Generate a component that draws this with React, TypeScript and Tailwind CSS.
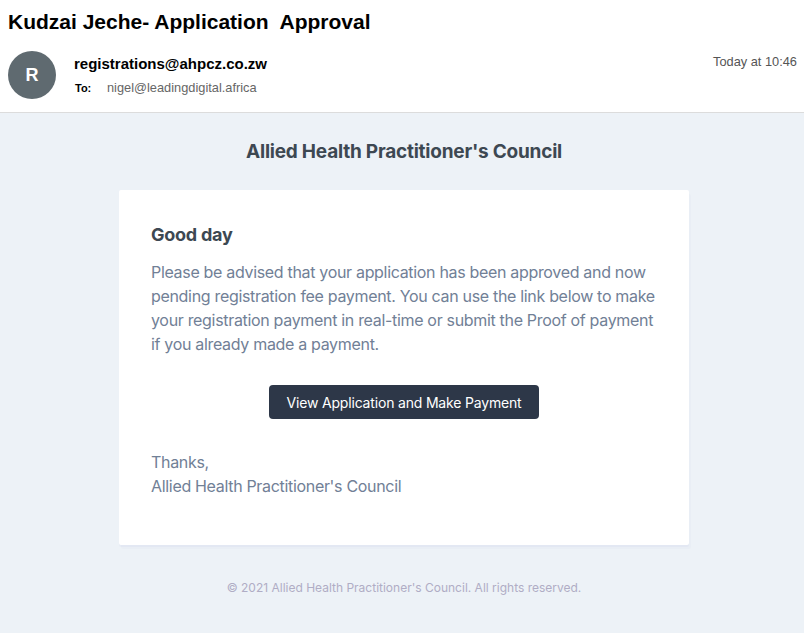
export default function App() {
  return (
    <div className="w-[804px] h-[633px] overflow-hidden bg-[#edf2f7] flex flex-col" style={{ fontFamily: '"Liberation Sans", Arial, sans-serif' }}>
      <div className="bg-white h-[113px] border-b border-[#dcdcdc] shrink-0 relative">
        <h1 className="absolute left-[8px] top-[8px] text-[21px] font-bold text-black whitespace-pre leading-[28px]">Kudzai Jeche- Application  Approval</h1>
        <div className="absolute left-[8px] top-[51px] w-[48px] h-[48px] rounded-full bg-[#5f6a70] flex items-center justify-center text-white text-[18px] font-bold">R</div>
        <div className="absolute left-[74px] top-[55px] text-[15px] font-bold text-black leading-[18px]">registrations@ahpcz.co.zw</div>
        <div className="absolute left-[75px] top-[81px] flex items-center text-[11px] leading-[14px]">
          <span className="font-bold text-black w-[32px]">To:</span>
          <span className="text-[12.8px] text-[#666]">nigel@leadingdigital.africa</span>
        </div>
        <div className="absolute right-[7px] top-[54px] text-[12.8px] text-[#555] leading-[16px]">Today at 10:46</div>
      </div>
      <div className="flex flex-col items-center pl-[4px]" style={{ fontFamily: 'Inter, "Liberation Sans", sans-serif' }}>
        <div className="h-[77px] pt-[2px] flex items-center justify-center text-[19px] font-bold tracking-[-0.22px] text-[#3d4852]">Allied Health Practitioner's Council</div>
        <div className="w-[570px] bg-white rounded-[2px] shadow-[0_2px_0_rgba(0,0,150,0.025),2px_4px_0_rgba(0,0,150,0.015)] px-[32px] pt-[32px] pb-[47px]">
          <div className="text-[18px] font-bold tracking-[-0.25px] text-[#3d4852] leading-[26px]">Good day</div>
          <p className="mt-[12px] text-[16px] leading-[24px] tracking-[-0.32px] text-[#718096]">Please be advised that your application has been approved and now pending registration fee payment. You can use the link below to make your registration payment in real-time or submit the Proof of payment if you already made a payment.</p>
          <div className="flex justify-center mt-[29px]">
            <div className="w-[270px] h-[34px] rounded-[4px] bg-[#2d3748] text-white text-[14px] tracking-[-0.18px] flex items-center justify-center">View Application and Make Payment</div>
          </div>
          <p className="mt-[31px] text-[16px] leading-[24px] tracking-[-0.32px] text-[#718096]">Thanks,<br />Allied Health Practitioner's Council</p>
        </div>
        <div className="mt-[34px] text-[12px] text-[#b0adc5]">© 2021 Allied Health Practitioner's Council. All rights reserved.</div>
      </div>
    </div>
  );
}
